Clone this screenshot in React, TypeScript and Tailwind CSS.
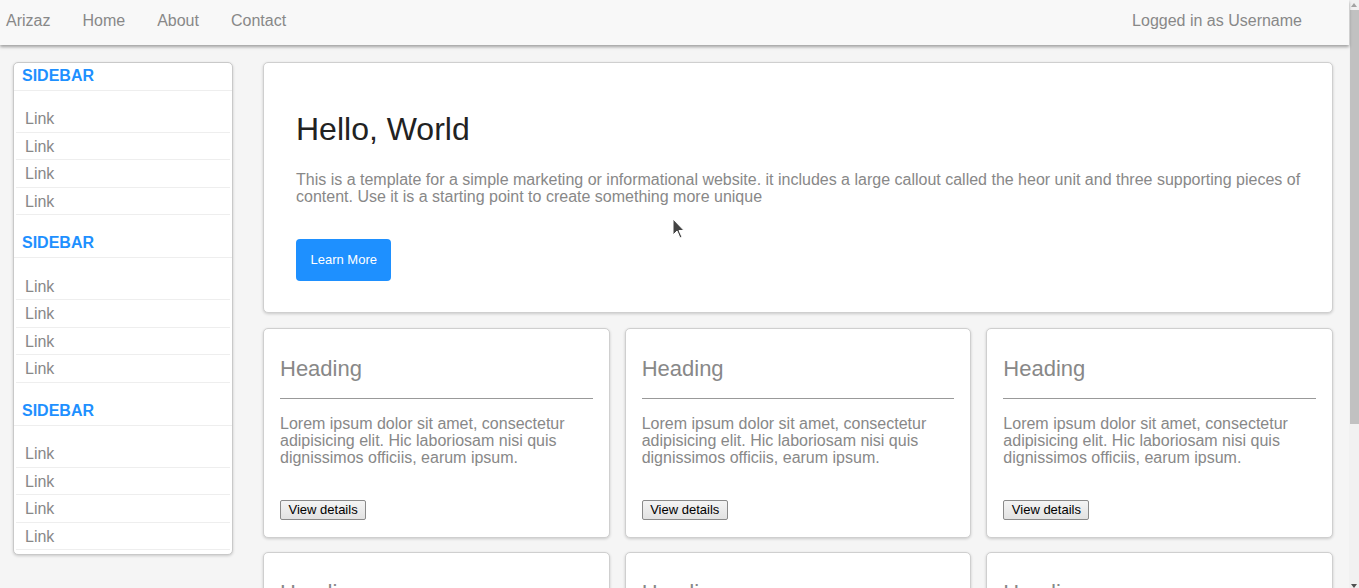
import React from "react";

const sections = ["SIDEBAR", "SIDEBAR", "SIDEBAR"];

function Card() {
  return (
    <div className="bg-white border border-[#cfcfcf] rounded-[5px] shadow-[0_1px_3px_rgba(0,0,0,0.18)] px-[16px] pt-[27px] pb-[16px]">
      <h2 className="text-[22px] leading-[26px] text-[#888888] font-normal">Heading</h2>
      <hr className="mt-[16px] border-0 border-t border-[#999999]" />
      <p className="mt-[16px] text-[16px] leading-[17px] text-[#888888]">
        Lorem ipsum dolor sit amet, consectetur adipisicing elit. Hic laboriosam nisi quis dignissimos officiis, earum ipsum.
      </p>
      <button className="mt-[34px] h-[20px] px-[7.5px] text-[13px] leading-[18px] text-black bg-gradient-to-b from-[#f4f4f4] to-[#e2e2e2] border border-[#8a8a8a] rounded-[2px]">
        View details
      </button>
    </div>
  );
}

export default function App() {
  return (
    <div className="h-[588px] overflow-hidden flex bg-[#f5f5f5] font-['Liberation_Sans',Arial,sans-serif]">
      <div className="w-[1349px] shrink-0 relative">
        <nav className="h-[45px] bg-[#f8f8f8] shadow-[0_2px_3px_rgba(0,0,0,0.35)] flex items-center pb-[4px] pl-[6px] pr-[47px] text-[16px] text-[#888888] relative z-10">
          <div className="flex items-center gap-[32px]">
            <a>Arizaz</a>
            <a>Home</a>
            <a>About</a>
            <a>Contact</a>
          </div>
          <div className="ml-auto">Logged in as Username</div>
        </nav>
        <div className="flex items-start pt-[17px] pl-[13px] pr-[16px] gap-[30px]">
          <aside className="w-[220px] shrink-0 bg-white border border-[#c9c9c9] rounded-[5px] shadow-[0_1px_3px_rgba(0,0,0,0.18)] pb-[3.5px]">
            {sections.map((s, i) => (
              <div key={i} className={i < 2 ? "mb-[15.17px]" : ""}>
                <h3 className="pl-[8px] pt-[4px] pb-[5px] leading-[18px] text-[16px] font-bold text-[#1e90ff] border-b border-[#eeeeee]">
                  {s}
                </h3>
                <ul className="mx-[2px] mt-[14.33px]">
                  {[0, 1, 2, 3].map((j) => (
                    <li key={j} className="h-[27.5px] pl-[9px] border-b border-[#eeeeee] text-[16px] leading-[27px] text-[#888888]">
                      Link
                    </li>
                  ))}
                </ul>
              </div>
            ))}
          </aside>
          <main className="flex-1 flex flex-col gap-[15px]">
            <section className="bg-white border border-[#cfcfcf] rounded-[5px] shadow-[0_1px_3px_rgba(0,0,0,0.18)] pl-[32px] pr-[26px] pt-[48px] pb-[31px]">
              <h1 className="text-[32px] leading-[37px] text-[#222222] font-normal">Hello, World</h1>
              <p className="mt-[23px] text-[16px] leading-[17px] text-[#888888]">
                This is a template for a simple marketing or informational website. it includes a large callout called the heor unit and three supporting pieces of content. Use it is a starting point to create something more unique
              </p>
              <button className="mt-[34px] h-[42px] px-[14.5px] rounded-[4px] bg-[#1e90ff] text-white text-[13px]">
                Learn More
              </button>
            </section>
            <div className="grid grid-cols-3 gap-x-[15px] gap-y-[14px]">
              <Card />
              <Card />
              <Card />
              <Card />
              <Card />
              <Card />
            </div>
          </main>
        </div>
        <svg className="absolute left-[672px] top-[218px] z-20" width="14" height="22" viewBox="0 0 14 22">
          <path d="M1 1 L1 17 L5 13 L8 20 L10 19 L7 12.5 L12 12.5 Z" fill="#444444" stroke="#ffffff" strokeWidth="1" />
        </svg>
      </div>
      <div className="w-[10px] shrink-0 bg-[#f1f1f1] flex flex-col">
        <div className="h-[10px] flex items-center justify-center">
          <svg width="6" height="4" viewBox="0 0 6 4">
            <path d="M0 4 L3 0 L6 4 Z" fill="#a3a3a3" />
          </svg>
        </div>
        <div className="h-[414px] ml-[1px] bg-[#c1c1c1]" />
        <div className="flex-1" />
        <div className="h-[8px] flex items-end justify-center">
          <svg width="6" height="4" viewBox="0 0 6 4">
            <path d="M0 0 L3 4 L6 0 Z" fill="#505050" />
          </svg>
        </div>
      </div>
    </div>
  );
}
